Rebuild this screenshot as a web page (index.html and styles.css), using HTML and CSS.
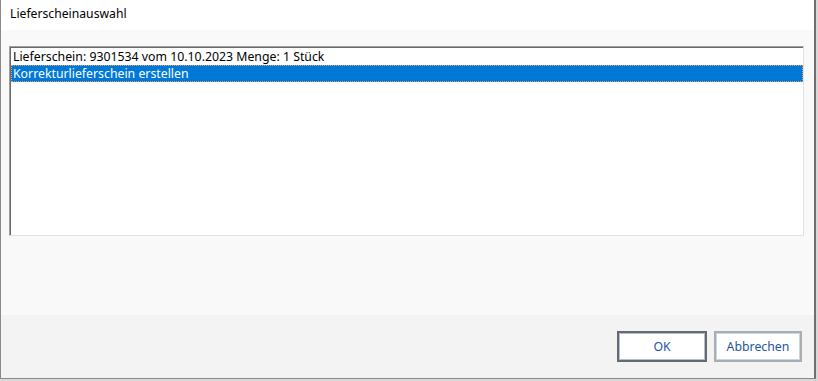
FILE: index.html
```html
<!DOCTYPE html>
<html lang="de">
<head>
    <meta charset="UTF-8">
    <meta name="viewport" content="width=device-width, initial-scale=1.0">
    <title>Lieferscheinauswahl</title>
    <link rel="stylesheet" href="styles.css">
</head>
<body>

    <div class="dialog">
        <div class="titlebar">Lieferscheinauswahl</div>

        <div class="content">
            <div class="listbox">
                <div class="item">Lieferschein: 9301534 vom 10.10.2023 Menge: 1 Stück</div>
                <div class="item selected">Korrekturlieferschein erstellen</div>
            </div>
        </div>

        <div class="footer">
            <button class="btn default">OK</button>
            <button class="btn">Abbrechen</button>
        </div>
    </div>

</body>
</html>
```

FILE: styles.css
```css
body {
    margin: 0;
    padding: 0;
    background: #d8d8d8;
    font-family: "Segoe UI", "Noto Sans", sans-serif;
    font-size: 12px;
    color: #000;
}
.dialog {
    width: 813px;
    height: 378px;
    background: #f9f9f9;
    border-left: 1px solid #8a8a8a;
    border-right: 2px solid #6f6f6f;
    border-bottom: 1px solid #8a8a8a;
    display: flex;
    flex-direction: column;
}
.titlebar {
    height: 30px;
    line-height: 28px;
    padding-left: 9px;
    background: #fff;
    font-size: 12.2px;
}
.content {
    flex: 1;
    padding: 16px 10px 0 8px;
    background: #f9f9f9;
}
.listbox {
    height: 187px;
    background: #fff;
    border: 1px solid;
    border-color: #a0a0a0 #e3e3e3 #e3e3e3 #a0a0a0;
    box-shadow: inset 1px 1px 0 #696969;
    padding: 1px 0 0 1px;
}
.item {
    height: 17px;
    line-height: 17px;
    padding-left: 2px;
    font-size: 12.3px;
    white-space: nowrap;
}
.item.selected {
    background: #0078d7;
    color: #fff;
    outline: 1px dotted #e8a060;
    outline-offset: -1px;
}
.footer {
    height: 63px;
    box-sizing: border-box;
    background: #f3f3f3;
    display: flex;
    justify-content: flex-end;
    align-items: flex-start;
    gap: 7px;
    padding: 16px 12px 0 0;
}
.btn {
    height: 31px;
    width: 88px;
    background: #fff;
    border: 2px solid #adadad;
    box-shadow: inset 0 0 0 1px #c4d6ec;
    font-family: inherit;
    font-size: 12.3px;
    color: #1c55a0;
    padding: 0;
}
.btn.default {
    width: 90px;
    border-color: #6a6a6a;
    box-shadow: inset 0 0 0 1px #a8c0dc;
}
```
